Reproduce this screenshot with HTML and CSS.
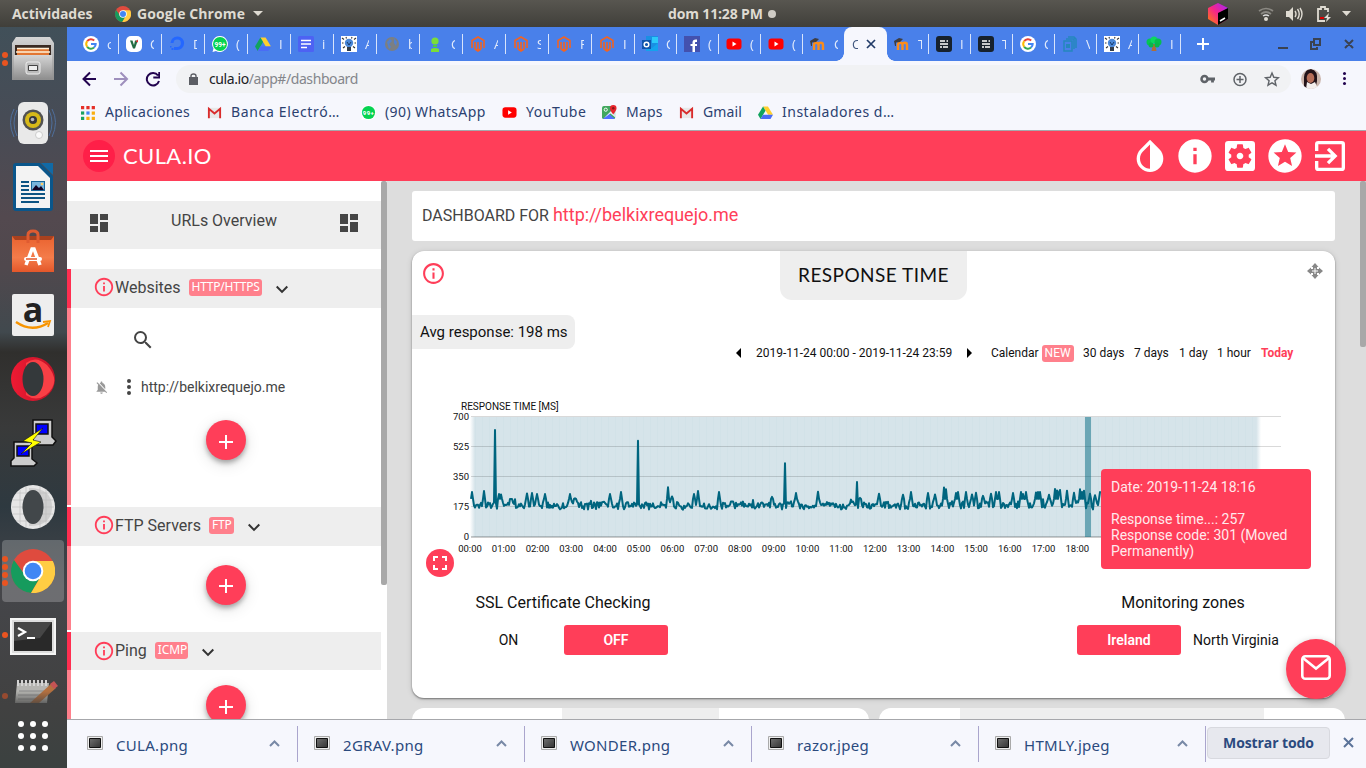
FILE: index.html
```html
<!DOCTYPE html>
<html lang="es">
<head>
<meta charset="utf-8">
<title>CULA.IO</title>
<link rel="stylesheet" href="styles.css">
</head>
<body>
<svg class="defs" width="0" height="0">
  <defs>
    <symbol id="g" viewBox="0 0 16 16"><circle cx="8" cy="8" r="8" fill="#fff"/><path d="M4.200 5.200A4.700 4.700 0 0 1 11.200 4.600" fill="none" stroke="#ea4335" stroke-width="2"/><path d="M4.200 10.800A4.700 4.700 0 0 1 4.200 5.200" fill="none" stroke="#fbbc05" stroke-width="2"/><path d="M4.200 10.800A4.700 4.700 0 0 0 11 11.600" fill="none" stroke="#34a853" stroke-width="2"/><path d="M8 8h4.700a4.700 4.700 0 0 1-1.700 3.600" fill="none" stroke="#4285f4" stroke-width="2"/></symbol>
    <symbol id="vee" viewBox="0 0 16 16"><rect width="16" height="16" rx="5" fill="#fff"/><path d="M4 4.500h2.500L8 9l1-4.500h2.800L9 12.500H7z" fill="#236c43"/><path d="M9.500 5.500 12 3.500v3z" fill="#d33"/></symbol>
    <symbol id="ocean" viewBox="0 0 16 16"><path d="M8 14v-3A3.700 3.700 0 1 0 4.500 7H1.500A6.800 6.800 0 1 1 8 14z" fill="#2467ff"/><path d="M5 11h3v3H5zM2.500 12h2v2h-2zM1 10h1.500v1.500H1z" fill="#2467ff"/></symbol>
    <symbol id="wa" viewBox="0 0 16 16"><path d="M8 0a8 8 0 1 1-4 15L.5 16l1-3.500A8 8 0 0 1 8 0z" fill="#fff"/><circle cx="8" cy="8" r="7" fill="#05d351"/><text x="8" y="10.800" text-anchor="middle" class="fav-num">99+</text></symbol>
    <symbol id="drive" viewBox="0 0 16 16"><path d="M5.400 1.500h5.200L16 10.500h-5.200z" fill="#ffcf2e"/><path d="M5.400 1.500 8 6 2.700 15 0 10.500z" fill="#11a35e"/><path d="M5.300 10.500H16L13.300 15H2.700z" fill="#4a6cf5"/></symbol>
    <symbol id="form" viewBox="0 0 16 16"><rect width="16" height="16" rx="1.500" fill="#4d62f3"/><path d="M3 4.500h10M3 8h10M3 11.500h6" stroke="#fff" stroke-width="1.500"/></symbol>
    <symbol id="bulb" viewBox="0 0 16 16"><path fill="#fff" d="M0 0h16v16H0z"/><circle cx="8" cy="7" r="4.200" fill="#4a87d8"/><path d="m6 6 2 3 2-3" stroke="#173a69" fill="none"/><path d="M6 11h4v4H6z" fill="#333d49"/><path d="M1 2l2 1.500M15 2l-2 1.500M1 7h1.500M13.500 7H15M2 12l2-1.500M14 12l-2-1.500M5 1l.5 1.500M11 1l-.5 1.500" stroke="#333" stroke-width="1.100"/></symbol>
    <symbol id="world" viewBox="0 0 16 16"><circle cx="8" cy="8" r="7" fill="#7b7f83"/><path d="m3 6 3-3 2 2-3 3 2 3-2 2zM10 2l3 4-1 4-2-3z" fill="#5281cf"/></symbol>
    <symbol id="person" viewBox="0 0 16 16"><circle cx="8" cy="5" r="3.600" fill="#7bdd39"/><path d="M6 9h4v2H6z" fill="#4dcd45"/><path d="M4 13q4-2 8 0v3H4z" fill="#7bdd39"/></symbol>
    <symbol id="mag" viewBox="0 0 16 16"><path d="M2 12V4.500L8 1l6 3.500V12M5 13V6M11 13V6M5 13l3 2 3-2M8 15V6" fill="none" stroke="#f26322" stroke-width="1.600"/></symbol>
    <symbol id="outlook" viewBox="0 0 16 16"><path d="M4 0h12v15H4z" fill="#1a8fe3"/><path d="M10 1h6v6h-6z" fill="#2cc9fa"/><path d="m4 9 6 3 6-5v8H4z" fill="#14a2ed"/><path d="M0 4h9v9H0z" fill="#0f54ad"/><circle cx="4.500" cy="8.500" r="2.300" fill="none" stroke="#fff" stroke-width="1.500"/></symbol>
    <symbol id="fb" viewBox="0 0 16 16"><path d="M0 0h16v16H0z" fill="#4351ae"/><path d="M8.500 16V6.500c0-2.500 1.500-3.300 4.500-3V6c-1.500-.2-2 .1-2 1v9zM6.500 8H13v2H6.500z" fill="#fff"/></symbol>
    <symbol id="yt" viewBox="0 0 16 16"><rect x=".5" y="2.500" width="15" height="11" rx="3" fill="#f00"/><path d="m6.500 5.500 4 2.500-4 2.500z" fill="#fff"/></symbol>
    <symbol id="moodle" viewBox="0 0 16 16"><path d="M4 14V9c0-3 4.500-3 4.500 0v5M8.500 9c0-3 4.500-3 4.500 0v5" fill="none" stroke="#f98c1c" stroke-width="2.400"/><path d="m0 5 5-3 4 1-3 3-4 .5V10H1z" fill="#3f3d42"/></symbol>
    <symbol id="elem" viewBox="0 0 16 16"><rect width="16" height="16" rx="3" fill="#17212d"/><path d="M4 5h5M4 8h8M4 11h2M7 11h5M10.500 5H12" stroke="#fff" stroke-width="1.600"/></symbol>
    <symbol id="docs" viewBox="0 0 16 16"><path d="M2 5h8v10H2zM4 3h8v10M6 1h6l2 2v9" fill="none" stroke="#2587bd" stroke-width="1.500"/><path d="M4 8h4v4H4z" fill="#2587bd"/></symbol>
    <symbol id="tree" viewBox="0 0 16 16"><path d="M7 8h2l1.500 7h-5z" fill="#b06d35"/><circle cx="4" cy="6" r="3.500" fill="#04c653"/><circle cx="8" cy="4" r="3.500" fill="#0bd860"/><circle cx="12" cy="6" r="3.500" fill="#06bd50"/><circle cx="5" cy="9" r="2.500" fill="#08b74b"/><circle cx="11" cy="9" r="2.500" fill="#08b74b"/></symbol>
    <symbol id="gmail" viewBox="0 0 16 16"><path d="M1 3h14v11H1z" fill="#e8e8e8"/><path d="M2 14V4l6 5 6-5v10" fill="none" stroke="#d92c2c" stroke-width="2"/></symbol>
    <symbol id="maps" viewBox="0 0 16 16"><rect y="1" width="14" height="14" rx="2" fill="#42a85f"/><path d="m1 15 6-6 7 6z" fill="#5271ff"/><path d="m2 14 11-11 1 10-5-4z" fill="#e7eef5"/><path d="m3 15 5-5 5 5z" fill="#5271ff"/><path d="M12 0a3.500 3.500 0 0 1 3.500 3.500C15.500 6 12 10 12 10S8.500 6 8.500 3.500A3.500 3.500 0 0 1 12 0z" fill="#e8252d"/><circle cx="12" cy="3.500" r="1.300" fill="#891818"/><circle cx="4" cy="5" r="1.700" fill="none" stroke="#fff"/></symbol>
    <symbol id="chrome" viewBox="0 0 44 44"><circle cx="22" cy="22" r="22" fill="#df4b3e"/><path d="M3 11a22 22 0 0 0 17 33l10-17-16-1z" fill="#169b5d"/><path d="M22 12h19.800A22 22 0 0 1 20 44l10-17z" fill="#ffcd43"/><circle cx="22" cy="22" r="10.300" fill="#fff"/><circle cx="22" cy="22" r="8.300" fill="#4187f4"/></symbol>
    <symbol id="info" viewBox="0 0 24 24"><path d="M11 17h2v-6h-2v6zm1-15C6.480 2 2 6.480 2 12s4.480 10 10 10 10-4.480 10-10S17.520 2 12 2zm0 18c-4.410 0-8-3.590-8-8s3.590-8 8-8 8 3.590 8 8-3.590 8-8 8zM11 9h2V7h-2v2z"/></symbol>
    <symbol id="dash" viewBox="0 0 24 24"><path d="M3 13h8V3H3v10zm0 8h8v-6H3v6zm10 0h8V11h-8v10zm0-18v6h8V3h-8z"/></symbol>
    <symbol id="down" viewBox="0 0 24 24"><path d="M7.410 7.840 12 12.420l4.590-4.580L18 9.250l-6 6-6-6z"/></symbol>
    <symbol id="thumb" viewBox="0 0 16 14"><path d="M.5.5h15v13H.5z" fill="#eee" stroke="#aaa"/><path d="M2.500 2.500h11v9h-11z" fill="url(#dark)" stroke="#111"/></symbol>
    <linearGradient id="dark" x2="1" y2="1"><stop stop-color="#727272"/><stop offset="1" stop-color="#333"/></linearGradient>
    <linearGradient id="metal" x2="0" y2="1"><stop stop-color="#d5d5d5"/><stop offset="1" stop-color="#8f8f8f"/></linearGradient>
    <linearGradient id="opera"><stop stop-color="#f01a33"/><stop offset="1" stop-color="#c01328"/></linearGradient>
    <linearGradient id="orange" x2="0" y2="1"><stop stop-color="#e9622f"/><stop offset=".6" stop-color="#f47c4a"/><stop offset="1" stop-color="#e4572a"/></linearGradient>
    <linearGradient id="cube" x1="0" y1="1" x2="1" y2="0"><stop stop-color="#ff8500"/><stop offset=".5" stop-color="#f6258b"/><stop offset="1" stop-color="#9b24ff"/></linearGradient>
  </defs>
</svg>

<header class="topbar">
  <span class="activities">Actividades</span>
  <svg class="tb-chrome" width="16" height="16"><use href="#chrome"/></svg>
  <span class="app-name">Google Chrome</span>
  <svg width="10" height="5"><path d="M0 0h10L5 5z" fill="#dfdbd2"/></svg>
  <span class="clock">dom 11:28 PM<i></i></span>
  <span class="tray">
    <svg width="20" height="22" viewBox="0 0 20 22"><path d="m10 0 10 5v11l-10 6-10-6V5z" fill="url(#cube)"/><path d="m10 10 10-5v11l-10 6z" fill="#000"/><path d="m12 18 5-3" stroke="#fff" stroke-width="1.500"/></svg>
    <svg class="wifi" width="16" height="14" viewBox="0 0 16 14" fill="none"><path d="M1 4q7-5 14 0M3 7q5-4 10 0" stroke="#8b8983" stroke-width="1.700"/><path d="M5 9q3-2 6 0" stroke="#ddd" stroke-width="1.500"/><circle cx="8" cy="12" r="2" fill="#dfdbd2"/></svg>
    <svg class="vol" width="17" height="14" viewBox="0 0 17 14"><path d="M0 4h3l4-4v14l-4-4H0z" fill="#dfdbd2"/><path d="M9 4q2 3 0 6M11.500 2q3.500 5 0 10M14 1q4 6 0 12" fill="none" stroke="#dfdbd2" stroke-width="1.400"/></svg>
    <svg class="bat" width="15" height="16" viewBox="0 0 15 16"><path d="M8 15H1V3h3V1h4v2h3v3" fill="none" stroke="#dfdbd2" stroke-width="1.800"/><path d="M3 11h4v2H3z" fill="#d00"/><path d="m12 7-5 5h3l-1 4 5-5h-3z" fill="#dfdbd2"/></svg>
    <svg class="caret" width="9" height="5"><path d="M0 0h9L4.500 5z" fill="#dfdbd2"/></svg>
  </span>
</header>

<div class="desktop">
<nav class="dock">
  <div class="app"><i class="dots"><b></b><b></b></i><svg width="42" height="44" viewBox="0 0 42 44"><path d="M4 0h34l4 6v37H0V6z" fill="url(#metal)"/><path d="M3 8h36v10H3z" fill="#3a2a22"/><path d="M5 11h32v7H5z" fill="#e27632"/><path d="M5 11.500h32M4 15h34" stroke="#fff1d8" stroke-width="1.300"/><path d="M2 18h38v24H2z" fill="url(#metal)"/><rect x="14" y="25" width="14" height="12" rx="2" fill="#bbb" stroke="#eee"/><path d="M16.500 28.500h9v5h-9z" fill="#eee" stroke="#444"/></svg></div>
  <div class="app"><svg width="48" height="44" viewBox="0 0 48 44"><path d="M5 8q-7 13 0 28M43 8q7 13 0 28M8 9q-6 13 0 26M40 9q6 13 0 26" fill="none" stroke="#4f6f9c"/><rect x="9" y="1" width="30" height="42" rx="6" fill="#e9e9e9"/><circle cx="24" cy="19" r="10.500" fill="#525252"/><circle cx="24" cy="19" r="8" fill="#d7b919"/><circle cx="24" cy="19" r="4" fill="#37373b"/><circle cx="23.500" cy="18.500" r="1.800" fill="#b8b8c0"/><circle cx="30" cy="34" r="3.500" fill="#fafafa" stroke="#ccc"/></svg></div>
  <div class="app"><svg width="40" height="48" viewBox="0 0 40 48"><path d="M3 0h24l13 13v32q0 3-3 3H3q-3 0-3-3V3q0-3 3-3z" fill="#0a568b"/><path d="M3 3h22l12 12v30H3z" fill="#f3f3f3"/><path d="M28 0h12v12z" fill="#116aa6"/><path d="M8 19h8M8 23h8M8 27h8M8 31h24M8 35h24M8 39h18" stroke="#0d5483" stroke-width="2"/><path d="M18 18h14v10H18z" fill="#17659a"/><path d="M19 19h12v8H19z" fill="#78b4dc"/><path d="m19 27 4-5 3 3 2-2 3 4z" fill="#102"/><circle cx="29" cy="21" r="1.300" fill="#fc6"/></svg></div>
  <div class="app"><svg width="42" height="44" viewBox="0 0 42 44"><path d="M0 7h42v36H0z" fill="url(#orange)"/><path d="M0 7h42l-3 4H3z" fill="#a9411f"/><path d="M16 14V6q0-4 5-4t5 4v8" fill="none" stroke="#df5b31" stroke-width="3"/><path d="m14 36 6-16h2l6 16" fill="none" stroke="#fff" stroke-width="3.500"/><rect x="12" y="28" width="18" height="4" rx="2" fill="#fff"/><path d="M14 30h11" stroke="#e4572a" stroke-width="1.500"/></svg></div>
  <div class="app"><svg width="42" height="42" viewBox="0 0 42 42"><rect width="42" height="42" rx="2" fill="#eee"/><text x="21" y="28" text-anchor="middle" class="amz">a</text><path d="M4 28q16 11 32 1" fill="none" stroke="#f79400" stroke-width="2.400"/><path d="m31 28 7-1-2 6" fill="none" stroke="#f79400" stroke-width="1.800"/></svg></div>
  <div class="app"><svg width="44" height="44" viewBox="0 0 44 44"><circle cx="22" cy="22" r="22" fill="url(#opera)"/><path d="M15 6Q25-2 36 8q15 17-1 30-10 7-20 0z" fill="#f93f45"/><ellipse cx="22" cy="22" rx="10.500" ry="17" fill="#34393b"/></svg></div>
  <div class="app"><svg width="48" height="48" viewBox="0 0 48 48" stroke="#111" stroke-width="1.500"><path d="M24 1h19v17l4 4-3 4H28l-4-4z" fill="#ccc"/><path d="M27 5h12v10H27z" fill="#00f"/><path d="M5 23h18v17l5 4-3 3H2v-5l3-3z" fill="#ccc"/><path d="M8 27h12v10H8z" fill="#00f"/><path d="m34 9-20 13 9 2-11 11 20-12-8-2z" fill="#ff0" stroke-width=".6"/></svg></div>
  <div class="app"><svg width="44" height="44" viewBox="0 0 44 44"><circle cx="22" cy="22" r="22" fill="#e6e6e6"/><path d="M18 3Q41 3 41 22T18 41" fill="#cfcfcf"/><path d="M5 8h34M2 15h40M1 22h42M2 29h40M5 36h34M9 5v34M15 2v40M29 2v40M35 4v36" stroke="#bdbdbd" stroke-width=".6"/><ellipse cx="22" cy="22" rx="10.500" ry="17" fill="#42474a"/></svg></div>
  <div class="app active"><i class="dots"><b></b><b></b><b></b><b></b></i><svg width="44" height="44"><use href="#chrome"/></svg></div>
  <div class="app"><i class="dots"><b></b></i><svg class="term" width="46" height="38" viewBox="0 0 46 38"><path d="M1 1h44v35H1z" fill="#ddd" stroke="#f5f5f5" stroke-width="2"/><path d="M4 4h38v29H4z" fill="#292929"/><path d="M4 4h38L30 20 4 23z" fill="#464646"/><path d="m8 10 7 4-7 4M17 20h8" fill="none" stroke="#fff" stroke-width="2.200"/></svg></div>
  <div class="app cut"><i class="dots"><b></b></i><svg width="46" height="24" viewBox="0 0 46 24"><path d="M5 4h32l-2 20H3z" fill="#c9c9c5"/><path d="M6 1v6M10 1v6M14 1v6M18 1v6M22 1v6M26 1v6M30 1v6M34 1v6" stroke="#eee" stroke-width="2"/><path d="M7 12h27M6 16h27M6 20h25" stroke="#888" stroke-width=".8"/><path d="m40 4 4 5-17 15h-9z" fill="#c9793f"/><path d="m38 5 4-3 4 5-4 3z" fill="#db5757"/></svg></div>
  <div class="grid9"><b></b><b></b><b></b><b></b><b></b><b></b><b></b><b></b><b></b></div>
</nav>

<main class="window">
  <div class="tabs">
    <div class="tab"><svg><use href="#g"/></svg><span>c</span></div>
    <div class="tab"><svg><use href="#vee"/></svg><span>C</span></div>
    <div class="tab"><svg><use href="#ocean"/></svg><span>D</span></div>
    <div class="tab"><svg><use href="#wa"/></svg><span>(</span></div>
    <div class="tab"><svg><use href="#drive"/></svg><span>I</span></div>
    <div class="tab"><svg><use href="#form"/></svg><span>i</span></div>
    <div class="tab"><svg><use href="#bulb"/></svg><span>A</span></div>
    <div class="tab"><svg><use href="#world"/></svg><span>b</span></div>
    <div class="tab"><svg><use href="#person"/></svg><span>C</span></div>
    <div class="tab"><svg><use href="#mag"/></svg><span>A</span></div>
    <div class="tab"><svg><use href="#mag"/></svg><span>S</span></div>
    <div class="tab"><svg><use href="#mag"/></svg><span>F</span></div>
    <div class="tab"><svg><use href="#mag"/></svg><span>I</span></div>
    <div class="tab n"><svg><use href="#outlook"/></svg><span>C</span></div>
    <div class="tab n"><svg><use href="#fb"/></svg><span>(</span></div>
    <div class="tab n"><svg><use href="#yt"/></svg><span>(</span></div>
    <div class="tab n"><svg><use href="#yt"/></svg><span>(</span></div>
    <div class="tab n last"><svg><use href="#moodle"/></svg><span>C</span></div>
    <div class="tab current"><span>C</span><svg viewBox="0 0 16 16"><path d="m4 4 8 8M12 4l-8 8" stroke="#213b68" stroke-width="1.700"/></svg></div>
    <div class="tab n"><svg><use href="#moodle"/></svg><span>T</span></div>
    <div class="tab n"><svg><use href="#elem"/></svg><span>I</span></div>
    <div class="tab n"><svg><use href="#elem"/></svg><span>T</span></div>
    <div class="tab n"><svg><use href="#g"/></svg><span>C</span></div>
    <div class="tab n"><svg><use href="#docs"/></svg><span>V</span></div>
    <div class="tab n"><svg><use href="#bulb"/></svg><span>A</span></div>
    <div class="tab n"><svg><use href="#tree"/></svg><span>I</span></div>
    <svg class="plus" viewBox="0 0 12 12"><path d="M6 0v12M0 6h12" stroke="#fff" stroke-width="2"/></svg>
    <svg class="winctl" width="76" height="12" viewBox="0 0 76 12" fill="none" stroke="#3a4252" stroke-width="2"><path d="M0 10h10M36 1h6v6h-6zM37 4h-4v7h6V9M67 2l8 8M75 2l-8 8"/></svg>
  </div>

  <div class="toolbar">
    <svg class="navs" width="78" height="16" viewBox="0 0 78 16" fill="none" stroke-width="2"><path d="M14 8H1M8 1.500 1.500 8 8 14.500" stroke="#22044f"/><path d="M32 8h13M38.500 1.500 45 8l-6.500 6.500" stroke="#9e8fbd"/><path d="M76 4.500A6.200 6.200 0 1 0 77 10M77.300 1v5.500h-6" stroke="#22044f"/></svg>
    <div class="omnibox">
      <svg width="9" height="12" viewBox="0 0 9 12"><path d="M0 4h9v8H0z" fill="#5c5e64"/><path d="M2 5V3q0-2 2.500-2T7 3v2" fill="none" stroke="#5c5e64" stroke-width="1.400"/></svg>
      <span class="url"><b>cula.io</b>/app#/dashboard</span>
      <svg class="omni-icons" width="80" height="16" viewBox="0 0 80 16" fill="none" stroke="#5f6368" stroke-width="1.500"><circle cx="4.500" cy="8" r="3" stroke-width="2.500"/><path d="M8 8h7M12.500 8v3.500" stroke-width="2.800"/><circle cx="40" cy="8.500" r="6"/><path d="M40 5v7M36.500 8.500h7"/><path d="m72 2 1.800 4.300 4.600.4-3.500 3 1.100 4.500-4-2.400-4 2.400 1.100-4.500-3.500-3 4.600-.4z" stroke-width="1.400"/></svg>
    </div>
    <svg class="avatar" width="20" height="20" viewBox="0 0 20 20"><clipPath id="c"><circle cx="10" cy="10" r="10"/></clipPath><g clip-path="url(#c)"><path fill="#cbb6ad" d="M0 0h20v20H0z"/><path d="M3 20V8q1-8 7-8 7 1 6 12l-1 5z" fill="#231319"/><ellipse cx="9.500" cy="9" rx="3.800" ry="5" fill="#b66e59"/><path d="m5 20 1-7 4 2 4-2 3 7z" fill="#f3eeec"/></g></svg>
    <i class="menu"></i>
  </div>

  <div class="bookmarks">
    <span class="bm b1"><svg viewBox="0 0 14 14"><path d="M0 1h3v3H0zM5 1h3v3H5zM10 1h3v3h-3z" fill="#e52f27"/><path d="M0 6h3v3H0z" fill="#1aa260"/><path d="M5 6h3v3H5z" fill="#4285f4"/><path d="M10 6h3v3h-3zM5 11h3v3H5zM10 11h3v3h-3z" fill="#f9ae10"/><path d="M0 11h3v3H0z" fill="#1aa260"/></svg>Aplicaciones</span>
    <span class="bm b2"><svg><use href="#gmail"/></svg>Banca Electró…</span>
    <span class="bm b3"><svg><use href="#wa"/></svg>(90) WhatsApp</span>
    <span class="bm b4"><svg><use href="#yt"/></svg>YouTube</span>
    <span class="bm b5"><svg><use href="#maps"/></svg>Maps</span>
    <span class="bm b6"><svg><use href="#gmail"/></svg>Gmail</span>
    <span class="bm b7"><svg><use href="#drive"/></svg>Instaladores d…</span>
  </div>

  <div class="apphead">
    <span class="burger"><i></i><i></i><i></i></span>
    <span class="brand">CULA.IO</span>
    <span class="actions">
      <svg viewBox="0 0 24 24"><path d="M17.660 7.930 12 2.270 6.340 7.930c-3.120 3.120-3.120 8.190 0 11.310C7.900 20.800 9.950 21.580 12 21.580s4.100-.78 5.660-2.340c3.120-3.120 3.120-8.190 0-11.310zM12 19.590c-1.600 0-3.110-.62-4.240-1.760C6.620 16.690 6 15.190 6 13.590s.62-3.110 1.760-4.240L12 5.100v14.490z"/></svg>
      <svg viewBox="0 0 24 24"><path d="M12 2C6.480 2 2 6.480 2 12s4.480 10 10 10 10-4.480 10-10S17.520 2 12 2zm1 15h-2v-6h2v6zm0-8h-2V7h2v2z"/></svg>
      <svg viewBox="0 0 24 24"><path d="M12 10c-1.100 0-2 .9-2 2s.9 2 2 2 2-.9 2-2-.9-2-2-2zm7-7H5a2 2 0 0 0-2 2v14a2 2 0 0 0 2 2h14a2 2 0 0 0 2-2V5a2 2 0 0 0-2-2zm-1.750 9c0 .23-.02.46-.05.68l1.480 1.160c.13.110.17.3.080.450l-1.400 2.420c-.09.150-.27.210-.43.150l-1.740-.7c-.36.280-.76.510-1.180.690l-.26 1.850c-.03.170-.18.300-.35.300h-2.800c-.17 0-.32-.13-.35-.29l-.26-1.850c-.43-.18-.82-.41-1.180-.69l-1.740.7c-.16.060-.34 0-.43-.15l-1.400-2.420c-.09-.15-.05-.34.080-.45l1.480-1.160c-.03-.23-.05-.46-.05-.69 0-.23.020-.46.050-.68l-1.480-1.160c-.13-.11-.17-.3-.08-.45l1.400-2.420c.09-.15.270-.21.430-.15l1.740.7c.36-.28.760-.51 1.180-.69l.26-1.850c.03-.17.180-.3.350-.3h2.800c.17 0 .32.130.35.290l.26 1.850c.43.180.82.410 1.180.69l1.740-.7c.16-.06.340 0 .43.150l1.400 2.420c.09.150.050.340-.08.450l-1.480 1.160c.03.230.050.460.050.690z"/></svg>
      <svg viewBox="0 0 24 24"><path d="M11.990 2C6.470 2 2 6.480 2 12s4.470 10 9.990 10C17.520 22 22 17.520 22 12S17.520 2 11.990 2zm4.240 16L12 15.450 7.770 18l1.120-4.810-3.730-3.230 4.920-.42L12 5l1.920 4.530 4.920.42-3.730 3.230L16.230 18z"/></svg>
      <svg viewBox="0 0 24 24"><path d="M10.090 15.590 11.500 17l5-5-5-5-1.410 1.410L12.670 11H3v2h9.670l-2.580 2.590zM19 3H5a2 2 0 0 0-2 2v4h2V5h14v14H5v-4H3v4a2 2 0 0 0 2 2h14a2 2 0 0 0 2-2V5a2 2 0 0 0-2-2z"/></svg>
    </span>
  </div>

  <div class="page">
    <aside class="side">
      <div class="overview"><svg><use href="#dash"/></svg><span>URLs Overview</span><svg><use href="#dash"/></svg></div>
      <section class="group web">
        <h3><svg class="inf"><use href="#info"/></svg><span>Websites</span><em>HTTP/HTTPS</em><svg class="chev"><use href="#down"/></svg></h3>
        <div class="gbody">
          <svg class="search" viewBox="0 0 24 24"><path d="M15.500 14h-.79l-.28-.27A6.470 6.470 0 0 0 16 9.500 6.500 6.500 0 1 0 9.500 16c1.610 0 3.090-.59 4.230-1.570l.27.28v.79l5 4.990L20.490 19l-4.990-5zm-6 0C7.010 14 5 11.990 5 9.500S7.010 5 9.500 5 14 7.010 14 9.500 11.990 14 9.500 14z"/></svg>
          <div class="site"><svg class="bell" viewBox="0 0 24 24"><path d="M20 18.690 7.840 6.140 5.270 3.490 4 4.760l2.800 2.800v.010c-.52.990-.8 2.160-.8 3.420v5l-2 2v1h13.730l2 2L21 19.720l-1-1.030zM12 22c1.110 0 2-.89 2-2h-4c0 1.110.89 2 2 2zm6-7.320V11c0-3.080-1.640-5.640-4.500-6.320V4c0-.83-.67-1.500-1.500-1.500s-1.500.67-1.500 1.500v.680c-.15.030-.29.080-.42.120-.1.030-.2.070-.3.110h-.01c-.01 0-.01 0-.02.010-.23.090-.46.200-.68.310L18 14.680z"/></svg><i class="kebab"></i><span>http://belkixrequejo.me</span></div>
          <span class="add"><svg viewBox="0 0 14 14"><path d="M7 0v14M0 7h14"/></svg></span>
        </div>
      </section>
      <section class="group ftp">
        <h3><svg class="inf"><use href="#info"/></svg><span>FTP Servers</span><em>FTP</em><svg class="chev"><use href="#down"/></svg></h3>
        <div class="gbody"><span class="add"><svg viewBox="0 0 14 14"><path d="M7 0v14M0 7h14"/></svg></span></div>
      </section>
      <section class="group ping">
        <h3><svg class="inf"><use href="#info"/></svg><span>Ping</span><em>ICMP</em><svg class="chev"><use href="#down"/></svg></h3>
        <div class="gbody"><span class="add"><svg viewBox="0 0 14 14"><path d="M7 0v14M0 7h14"/></svg></span></div>
      </section>
    </aside>
    <div class="scroll-l"></div>

    <div class="content">
      <div class="title">DASHBOARD FOR <b>http://belkixrequejo.me</b></div>
      <section class="card">
        <div class="card-top">
          <svg class="cinfo"><use href="#info"/></svg>
          <h2>RESPONSE TIME</h2>
          <svg class="move" viewBox="0 0 16 16"><path d="M8 0l3.500 4h-7zM8 16l3.500-4h-7zM0 8l4-3.500v7zM16 8l-4-3.500v7zM4 6h8v4H4zM6 4h4v8H6z"/><path d="M8 5v6M5 8h6" stroke="#fff" stroke-width="1"/></svg>
        </div>
        <div class="avg">Avg response: 198 ms</div>
        <div class="range">
          <i class="arr l"></i><span class="dates">2019-11-24 00:00 - 2019-11-24 23:59</span><i class="arr r"></i>
          <span class="cal">Calendar <em>NEW</em></span><span class="d30">30 days</span><span class="d7">7 days</span><span class="d1">1 day</span><span class="h1">1 hour</span><b>Today</b>
        </div>
        <div class="chart"><svg id="chart" width="900" height="170"></svg>
          <div class="tip">Date: 2019-11-24 18:16<br><br>Response time...: 257<br>Response code: 301 (Moved Permanently)</div>
          <span class="full"><svg viewBox="0 0 24 24"><path d="M7 14H5v5h5v-2H7v-3zm-2-4h2V7h3V5H5v5zm12 7h-3v2h5v-5h-2v3zM14 5v2h3v3h2V5h-5z"/></svg></span>
        </div>
        <div class="opts">
          <div class="opt ssl"><p>SSL Certificate Checking</p><div><span>ON</span><b>OFF</b></div></div>
          <div class="opt zones"><p>Monitoring zones</p><div><b>Ireland</b><span>North Virginia</span></div></div>
        </div>
      </section>
      <div class="next"><div class="nc n1"><i></i></div><div class="nc n2"><i></i></div></div>
      <div class="scroll-r"></div>
      <div class="mail"><svg viewBox="0 0 30 25" fill="none" stroke="#fff" stroke-width="2.600"><rect x="1.300" y="1.300" width="27.400" height="22.400" rx="3"/><path d="m2 3 13 10.500L28 3"/></svg></div>
    </div>
  </div>

  <footer class="downloads">
    <div class="dl"><svg class="th"><use href="#thumb"/></svg><span>CULA.png</span><svg class="up"><path d="m1 6 4.500-4.500L10 6"/></svg></div>
    <div class="dl"><svg class="th"><use href="#thumb"/></svg><span>2GRAV.png</span><svg class="up"><path d="m1 6 4.500-4.500L10 6"/></svg></div>
    <div class="dl"><svg class="th"><use href="#thumb"/></svg><span>WONDER.png</span><svg class="up"><path d="m1 6 4.500-4.500L10 6"/></svg></div>
    <div class="dl"><svg class="th"><use href="#thumb"/></svg><span>razor.jpeg</span><svg class="up"><path d="m1 6 4.500-4.500L10 6"/></svg></div>
    <div class="dl"><svg class="th"><use href="#thumb"/></svg><span>HTMLY.jpeg</span><svg class="up"><path d="m1 6 4.500-4.500L10 6"/></svg></div>
    <button>Mostrar todo</button>
    <svg class="close" width="11" height="11"><path d="m1 1 9 9M10 1l-9 9" stroke="#5b7399" stroke-width="2"/></svg>
  </footer>
</main>
</div>
<script src="chart.js"></script>
</body>
</html>
```
FILE: styles.css
```css
* { box-sizing: border-box; }
body { margin: 0; width: 1366px; height: 768px; overflow: hidden; font-family: Roboto, sans-serif; color: #444; }
svg { flex: none; display: block; }
.defs { position: absolute; }
p, h2, h3 { margin: 0; font-weight: 400; }
em { font-style: normal; }

.topbar { position: relative; height: 27px; display: flex; align-items: center; padding-left: 12px; background: linear-gradient(#585650, #403f3a); color: #dfdbd2; font: 700 14px "Open Sans", sans-serif; }
.activities { width: 103px; letter-spacing: -.05px; }
.app-name { margin-left: 6px; width: 116px; letter-spacing: .1px; }
.clock { position: absolute; left: 668px; display: flex; align-items: center; gap: 5px; white-space: nowrap; letter-spacing: -.15px; }
.clock i { width: 8px; height: 8px; border-radius: 50%; background: #cfccc5; }
.tray { display: flex; align-items: center; margin-left: auto; padding-right: 15px; }
.wifi { margin-left: 30px; }
.vol { margin-left: 12px; }
.bat { margin-left: 14px; }
.caret { margin-left: 10px; }

.desktop { display: flex; height: 741px; }
.dock { width: 67px; background: linear-gradient(#415059 0, #474c56 90px, #53494f 190px, #50484d 240px, #41494e 305px, #302f2d 325px, #393a3a 400px, #2e3940 480px, #45464a 560px, #414141 680px, #3b4140 741px); }
.app { position: relative; height: 64px; display: flex; align-items: center; justify-content: center; padding-right: 2px; }
.app.active::before { content: ""; position: absolute; inset: 1px 3px 1px 2px; background: rgba(255,255,255,.22); border-radius: 4px; }
.app svg { position: relative; }
.app .term { margin-top: 4px; }
.app.cut { height: 40px; opacity: .85; align-items: flex-end; padding-bottom: 4px; }
.app.cut svg { margin-left: 5px; -webkit-mask: linear-gradient(#000 50%, rgba(0,0,0,.3)); mask: linear-gradient(#000 50%, rgba(0,0,0,.3)); }
.app.cut .dots { opacity: .6; padding-top: 18px; }
.dots { position: absolute; left: 2px; top: 0; height: 100%; display: flex; flex-direction: column; justify-content: center; gap: 2px; }
.dots b { width: 6px; height: 6px; border-radius: 50%; background: #e95420; }
.grid9 { display: grid; grid-template-columns: repeat(3, 6px); gap: 6px; margin: 14px 0 0 18px; }
.grid9 b { width: 6px; height: 6px; border-radius: 50%; background: #fff; }
.amz { font: 700 34px "Open Sans", sans-serif; fill: #222; }
.fav-num { font: 700 6.500px Roboto, sans-serif; fill: #fff; }

.window { width: 1299px; display: flex; flex-direction: column; }
.tabs { position: relative; height: 34px; background: #4980ea; display: flex; align-items: center; padding-left: 9px; color: #fff; }
.tab { position: relative; width: 43px; height: 34px; display: flex; align-items: center; padding-left: 7px; font: 13px "Open Sans", sans-serif; flex: none; }
.tab.n { width: 42px; }
.tab svg { width: 16px; height: 16px; }
.tab span { width: 4px; margin-left: 8px; overflow: hidden; opacity: .85; }
.tab::after { content: ""; position: absolute; right: 0; top: 7px; width: 1px; height: 20px; background: #d8e4fb; }
.tab.last::after, .tab.current::after { display: none; }
.tab.current { width: 43px; margin: 0 0 0 -1px; background: #f6f7fd; border-radius: 8px 8px 0 0; color: #213b68; padding-left: 0; z-index: 1; }
.tab.current::before { content: ""; position: absolute; left: -8px; right: -8px; bottom: 0; height: 8px; background: radial-gradient(circle at 0 0, transparent 7.500px, #f6f7fd 8px) left / 8px 8px no-repeat, radial-gradient(circle at 100% 0, transparent 7.500px, #f6f7fd 8px) right / 8px 8px no-repeat; }
.tab.current span { width: 6px; }
.tab.current svg { margin-left: 5px; }
.plus { width: 12px; height: 12px; margin-left: 16px; }
.winctl { margin-left: auto; margin-right: 12px; }

.toolbar { height: 35px; background: #f6f7fd; display: flex; align-items: center; padding-left: 15px; }
.omnibox { margin-left: 16px; width: 1115px; height: 28px; border-radius: 14px; background: #f1f2f4; display: flex; align-items: center; padding: 0 11px 0 13px; }
.url { margin-left: 11px; font: 14px "Noto Sans", sans-serif; letter-spacing: -.42px; color: #84868b; }
.url b { color: #202124; font-weight: 400; }
.omni-icons { margin-left: auto; }
.avatar { margin-left: 10px; }
.menu { width: 3px; height: 3px; margin-left: 22px; border-radius: 50%; background: #22044f; box-shadow: 0 -5px #22044f, 0 5px #22044f; }

.bookmarks { height: 35px; background: #f6f7fd; border-bottom: 1px solid #a6a7ab; display: flex; align-items: center; padding-left: 14px; }
.bm { display: flex; align-items: center; font: 14px "Noto Sans", sans-serif; letter-spacing: .4px; color: #2b4170; white-space: nowrap; flex: none; padding-bottom: 4px; }
.bm svg { width: 15px; height: 15px; margin: 2px 9px 0 0; }
.b1 { width: 126px; letter-spacing: .3px; } .b2 { width: 154px; letter-spacing: .65px; } .b3 { width: 141px; } .b4 { width: 100px; letter-spacing: .55px; } .b5 { width: 77px; letter-spacing: .2px; } .b6 { width: 79px; letter-spacing: .1px; } .b7 { letter-spacing: .5px; }

.apphead { height: 50px; background: #ff3e59; display: flex; align-items: center; padding: 0 16px; }
.burger { width: 32px; height: 32px; border-radius: 50%; background: #ff1f48; display: flex; flex-direction: column; align-items: center; justify-content: center; gap: 3px; }
.burger i { width: 18px; height: 2px; background: #fff; }
.brand { margin-left: 8px; color: #fff; font: 22px Lato, sans-serif; letter-spacing: .4px; padding-bottom: 2px; }
.actions { margin-left: auto; display: flex; gap: 5px; }
.actions svg { width: 40px; height: 40px; fill: #fff; }

.page { height: 538px; display: flex; overflow: hidden; }
.side { width: 314px; background: #fff; padding-top: 20px; }
.overview { height: 48px; background: #eee; display: flex; align-items: center; justify-content: space-between; padding: 0 20px; font-size: 16px; }
.overview svg { width: 24px; height: 24px; fill: #444; margin-bottom: 4px; }
.overview span { padding-bottom: 9px; }
.web { margin-top: 20px; }
.group { margin-bottom: 2px; }
.group h3 { height: 39px; background: #eee; border-left: 4px solid #ff2e50; display: flex; align-items: center; padding: 0 0 3px 22px; font-size: 16px; white-space: nowrap; }
.ping h3 { height: 38px; padding-bottom: 1px; }
.inf { width: 22px; height: 22px; fill: #ff3e59; }
.group em { background: #ff808c; color: #fff; font: 12px/16px "Noto Sans", sans-serif; letter-spacing: -.15px; padding: 0 2px 0 3px; border-radius: 3px; margin-left: 8px; height: 17px; }
.web em { letter-spacing: -.25px; width: 73px; }
.ftp em { width: 25px; }
.ping em { width: 33px; }
.chev { width: 24px; height: 24px; margin: 5px 0 0 8px; fill: #333; }
.gbody { border-left: 4px solid #ff808c; display: flex; flex-direction: column; }
.web .gbody { height: 197px; padding-top: 20px; }
.ftp .gbody { height: 84px; padding-top: 19px; }
.ping .gbody { height: 60px; padding-top: 15px; }
.search { width: 24px; height: 24px; fill: #444; margin-left: 60px; }
.site { display: flex; align-items: center; font-size: 14px; height: 20px; margin-top: 25px; }
.bell { width: 15px; height: 15px; fill: #999; margin-left: 23px; }
.kebab { width: 4px; height: 4px; margin: 0 10px 0 18px; border-radius: 50%; background: #444; box-shadow: 0 -6px #444, 0 6px #444; }
.add { flex: none; width: 40px; height: 40px; border-radius: 50%; margin-left: 135px; background: #ff3e59; display: grid; place-items: center; padding-top: 4px; box-shadow: 0 3px 5px rgba(0,0,0,.3), 0 4px 16px rgba(0,0,0,.13); }
.add svg { width: 14px; height: 14px; stroke: #fff; stroke-width: 2; }
.ftp .add { padding-top: 2px; }
.web .add { margin-top: 23px; }
.scroll-l { width: 6px; height: 404px; background: #a8a8a8; border-radius: 2px; }

.content { position: relative; width: 979px; background: #ddd; padding: 10px 0 0 25px; }
.title { width: 923px; height: 50px; background: #fff; border-radius: 3px; padding: 13px 10px; font-size: 16px; line-height: 22px; }
.title b { font-weight: 400; font-size: 18px; color: #ff3e59; }
.card { width: 923px; height: 447px; margin-top: 10px; background: #fff; border-radius: 12px; box-shadow: 0 1px 2px rgba(0,0,0,.45), 0 1px 6px rgba(0,0,0,.12); color: #111; }
.card-top { height: 64px; display: flex; align-items: flex-start; padding: 0 12px 0 9px; }
.cinfo { width: 25px; height: 25px; fill: #ff3e59; margin-top: 10px; }
.card h2 { width: 187px; height: 49px; background: #eee; border-radius: 0 0 12px 12px; font: 19px/48px Lato, sans-serif; text-align: center; letter-spacing: .45px; margin-left: 334px; }
.move { width: 16px; height: 16px; fill: #888; margin: 12px 0 0 auto; }
.avg { width: 163px; height: 34px; background: #eee; border-radius: 0 8px 8px 0; font-size: 15px; line-height: 34px; padding-left: 8px; white-space: nowrap; }
.range { height: 18px; margin-top: -5px; display: flex; align-items: center; padding-left: 324px; font-size: 12px; white-space: nowrap; }
.arr { border: 5px solid transparent; width: 0; height: 0; }
.arr.l { border-right: 5px solid #000; border-left: 0; }
.arr.r { border-left: 5px solid #000; border-right: 0; margin-left: 15px; }
.dates { margin-left: 15px; width: 196px; }
.cal { margin-left: 19px; width: 92px; }
.cal em { background: #ff808c; color: #fff; border-radius: 3px; padding: 1px 3px 2px; }
.d30 { width: 51px; } .d7 { width: 45px; } .d1 { width: 38px; } .h1 { width: 44px; }
.range b { color: #ff3e59; font-weight: 700; }
.chart { position: relative; height: 219px; padding-top: 29px; }
.axis { font: 9.500px Roboto, sans-serif; fill: #111; }
.axis-title { font: 10px Roboto, sans-serif; fill: #111; }
.tip { position: absolute; left: 689px; top: 107px; width: 210px; height: 100px; border-radius: 4px; background: #ff3e59; color: #ffe9ec; font-size: 14px; line-height: 16px; padding: 10px; }
.full { position: absolute; left: 14px; top: 187px; width: 28px; height: 28px; border-radius: 50%; background: #ff3e59; display: grid; place-items: center; }
.full svg { width: 24px; height: 24px; fill: #fff; }
.opts { display: flex; justify-content: space-between; padding: 12px 46px 0 52px; }
.opt p { font-size: 16px; line-height: 20px; text-align: center; }
.opt div { display: flex; height: 30px; margin-top: 12px; font-size: 14px; line-height: 30px; text-align: center; }
.opt b { width: 104px; background: #ff3e59; color: #fff; border-radius: 3px; font-weight: 600; }
.ssl { width: 204px; } .ssl p { width: 199px; } .ssl span { width: 89px; margin-right: 11px; }
.zones { width: 212px; } .zones span { margin-left: 12px; white-space: nowrap; }
.ssl p { padding-right: 1px; }
.next { display: flex; gap: 10px; margin-top: 10px; }
.nc { height: 40px; background: #fff; border-radius: 12px 12px 0 0; }
.nc i { display: block; height: 40px; background: #eee; }
.n1 { width: 457px; } .n1 i { margin-left: 150px; width: 157px; }
.n2 { width: 466px; } .n2 i { margin-left: 81px; width: 304px; }
.scroll-r { position: absolute; right: 0; top: 0; width: 6px; height: 166px; background: #a8a8a8; border-radius: 2px; }
.mail { position: absolute; left: 899px; top: 458px; width: 60px; height: 60px; border-radius: 50%; background: #ff3e59; display: grid; place-items: center; padding-bottom: 3px; box-shadow: 0 2px 7px rgba(0,0,0,.25); }
.mail svg { width: 30px; height: 25px; }

.downloads { position: relative; height: 49px; background: #f6f7fd; border-top: 1px solid #a6a7ab; display: flex; align-items: center; padding-left: 3px; color: #2b4a7e; }
.dl { width: 227px; height: 36px; border-right: 1px solid #aaa5cd; display: flex; align-items: center; font: 15px "Noto Sans", sans-serif; padding: 0 17px 0 16px; flex: none; }
.dl:first-child { width: 228px; padding-left: 17px; }
.dl .th { width: 16px; height: 14px; margin-bottom: 3px; }
.dl span { margin-left: 13px; padding-top: 1px; letter-spacing: .3px; }
.up { width: 11px; height: 8px; margin-left: auto; stroke: #7889a6; stroke-width: 2; fill: none; }
.downloads button { margin: -3px 0 0 1px; width: 123px; height: 32px; border: 1px solid #d8d9df; border-radius: 4px; background: #e7e8ee; color: #2b4a7e; font: 700 14px "Open Sans", sans-serif; letter-spacing: -.1px; padding: 0; white-space: nowrap; }
.close { margin: -3px 0 0 13px; }
```
FILE: chart.js
```js
// Each peak is [x, height in ms]; the line between peaks is low jitter.
const peaks = [[1,262],[13,268],[24,624],[28,250],[30,248],[40,222],[56,254],[61,256],[66,250],[74,250],[99,250],[104,226],[139,250],[150,262],[167,562],[197,290],[201,236],[223,250],[227,268],[248,262],[301,234],[314,430],[325,256],[347,264],[386,320],[389,228],[408,252],[432,246],[440,262],[457,256],[464,248],[473,288],[475,278],[485,256],[487,262],[495,262],[501,248],[505,258],[512,240],[520,252],[525,262],[528,262],[542,256],[550,262],[552,250],[555,262],[565,260],[567,262],[569,262],[578,246],[584,280],[586,272],[588,262],[589,274],[596,270],[603,258],[609,278],[611,262],[613,270],[619,252],[624,244],[629,262],[630,260]];
const X0 = 59, Y0 = 146, H = 120;
const y = v => Y0 - v * H / 700;
let seed = 9;
const rnd = () => (seed = (seed * 16807) % 2147483647) / 2147483647;
const pts = [];
for (let i = 0; i < 631; i++) {
  const v = 184 + Math.sin(i / 5) * 5 + (rnd() - .5) * 40 + (rnd() > .94 ? 14 : 0);
  pts.push([i, Math.max(160, v)]);
}
for (const [px, pv] of peaks) {
  for (const p of pts) {
    const d = Math.abs(p[0] - px);
    if (d < 1) p[1] = pv;
    else if (d < 2 && pv < 300) p[1] = Math.max(p[1], 222);
  }
}
const line = pts.map(([i, v]) => (X0 + i).toFixed(1) + "," + y(v).toFixed(1)).join(" ");
let s = '<defs><linearGradient id="band"><stop stop-color="#d6e4ea" stop-opacity="0"/><stop offset=".006" stop-color="#d6e4ea"/><stop offset=".994" stop-color="#d6e4ea"/><stop offset="1" stop-color="#d6e4ea" stop-opacity="0"/></linearGradient><pattern id="stripe" width="7" height="9" patternUnits="userSpaceOnUse"><path d="M0 0h1v9H0z" fill="#cddfe6" opacity=".4"/></pattern></defs>';
s += '<rect x="58" y="26" width="791" height="120" fill="url(#band)"/><rect x="62" y="26" width="784" height="120" fill="url(#stripe)"/>';
[700, 525, 350, 175, 0].forEach((v, i) => {
  const gy = 25.5 + i * 30;
  s += `<path d="M59 ${i === 4 ? 146 : gy}H869" stroke="#000" stroke-opacity="${i === 4 ? .4 : .15}"/>`;
  s += `<text class="axis" x="57" y="${gy + 3.5}" text-anchor="end">${v}</text>`;
});
for (let h = 0; h < 19; h++) {
  s += `<text class="axis" x="${(58 + h * 33.74).toFixed(1)}" y="161" text-anchor="middle">${String(h).padStart(2, "0")}:00</text>`;
}
s += '<text class="axis-title" x="49" y="19">RESPONSE TIME [MS]</text>';
s += `<polyline points="${line}" fill="none" stroke="#00657f" stroke-width="2" stroke-linejoin="round"/>`;
s += '<rect x="673" y="26" width="6" height="120" fill="#006880" fill-opacity=".5"/>';
document.getElementById("chart").innerHTML = s;
```
